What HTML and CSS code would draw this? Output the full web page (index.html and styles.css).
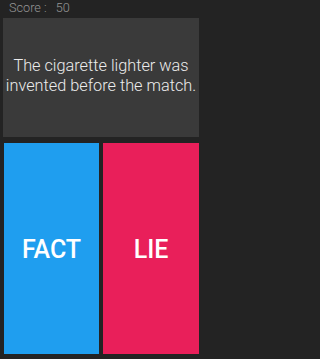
FILE: index.html
```html
<!DOCTYPE html>
<html lang="en">
<head>
<meta charset="utf-8">
<title>Fact or Lie</title>
<link rel="stylesheet" href="styles.css">
</head>
<body>
<div class="app">
  <header class="score">
    <span class="score-label">Score :</span>
    <span class="score-value">50</span>
  </header>
  <section class="card">
    <p class="statement">The cigarette lighter was invented before the match.</p>
  </section>
  <div class="answers">
    <button class="answer fact">FACT</button>
    <button class="answer lie">LIE</button>
  </div>
</div>
</body>
</html>
```

FILE: styles.css
```css
html, body {
  margin: 0;
  padding: 0;
  height: 100%;
  background: #232323;
}
.app {
  display: flex;
  flex-direction: column;
  height: 359px;
  width: 202px;
  font-family: Roboto, "Noto Sans", sans-serif;
}
.score {
  height: 18px;
  display: flex;
  align-items: center;
  gap: 9px;
  padding-left: 9px;
  font-size: 12.7px;
  font-weight: 300;
  color: #959595;
  line-height: 1;
  padding-bottom: 1px;
  box-sizing: border-box;
}
.card {
  margin: 0 3px;
  height: 119px;
  background: #3a3a3a;
  display: flex;
  align-items: center;
  justify-content: center;
}
.statement {
  margin: 0;
  padding-bottom: 3px;
  text-align: center;
  color: #ececec;
  font-size: 16.3px;
  font-weight: 300;
  line-height: 20.5px;
}
.answers {
  display: flex;
  gap: 4px;
  margin: 6px 3px 0 4px;
  height: 211px;
}
.answer {
  flex: 1;
  border: 0;
  padding: 0;
  margin: 0;
  font-family: Roboto, "Noto Sans", sans-serif;
  font-size: 25px;
  font-weight: 500;
  color: #ffffff;
  display: flex;
  align-items: center;
  justify-content: center;
  padding-top: 2px;
}
.fact {
  background: #1f9eef;
  flex: 0 0 95px;
}
.lie {
  background: #e91f5a;
}
```
